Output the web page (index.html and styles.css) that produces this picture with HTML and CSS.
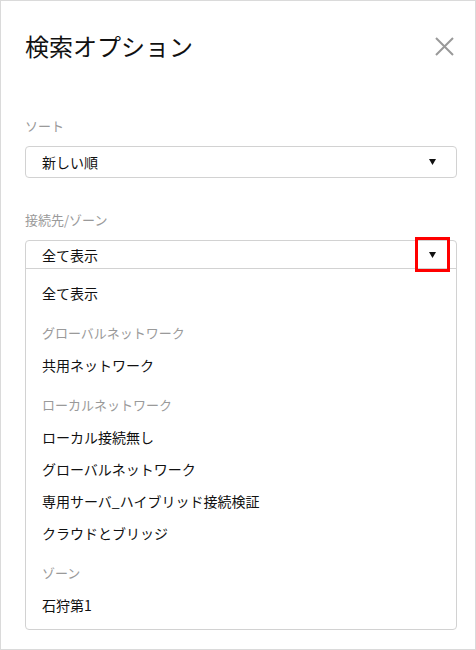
FILE: index.html
```html
<!DOCTYPE html>
<html lang="ja">
<head>
    <meta charset="UTF-8">
    <meta name="viewport" content="width=device-width, initial-scale=1.0">
    <title>検索オプション</title>
    <link rel="stylesheet" href="styles.css">
</head>
<body>
    <div class="dialog">
        <div class="dialog-head">
            <h1 class="dialog-title">検索オプション</h1>
            <svg class="close" width="19" height="19" viewBox="0 0 19 19">
                <path d="M1 1L18 18M18 1L1 18" stroke="#999" stroke-width="2" fill="none"/>
            </svg>
        </div>

        <div class="field first">
            <div class="field-label">ソート</div>
            <div class="select">
                <span>新しい順</span>
                <svg class="caret" width="7" height="6" viewBox="0 0 7 6"><polygon points="0,0 7,0 3.5,6" fill="#111"/></svg>
            </div>
        </div>

        <div class="field">
            <div class="field-label">接続先/ゾーン</div>
            <div class="combo">
                <div class="combo-head">
                    <span>全て表示</span>
                    <svg class="caret" width="7" height="6" viewBox="0 0 7 6"><polygon points="0,0 7,0 3.5,6" fill="#111"/></svg>
                    <span class="highlight"></span>
                </div>
                <ul class="options">
                    <li class="option">全て表示</li>
                    <li class="group">グローバルネットワーク</li>
                    <li class="option">共用ネットワーク</li>
                    <li class="group">ローカルネットワーク</li>
                    <li class="option">ローカル接続無し</li>
                    <li class="option">グローバルネットワーク</li>
                    <li class="option">専用サーバ_ハイブリッド接続検証</li>
                    <li class="option">クラウドとブリッジ</li>
                    <li class="group">ゾーン</li>
                    <li class="option">石狩第1</li>
                </ul>
            </div>
        </div>
    </div>
</body>
</html>
```

FILE: styles.css
```css
*{
    padding: 0;
    margin: 0;
    box-sizing: border-box;
}
body{
    font-family: "Noto Sans CJK JP", "Noto Sans", sans-serif;
    color: #111;
    background: #fff;
}
.dialog{
    width: 476px;
    height: 650px;
    border: 1px solid #dadada;
    padding: 30px 18px 0 24px;
}
.dialog-head{
    display: flex;
    justify-content: space-between;
    align-items: center;
    height: 30px;
}
.dialog-title{
    font-size: 24px;
    font-weight: normal;
    line-height: 30px;
}
.close{
    display: block;
    margin-right: 3px;
}
.field{
    margin-top: 32px;
}
.field.first{
    margin-top: 55px;
}
.field-label{
    font-size: 13px;
    line-height: 20px;
    color: #9a9a9a;
    margin-bottom: 10px;
}
.select{
    height: 32px;
    border: 1px solid #d2d2d2;
    border-radius: 4px;
    padding: 0 20px 0 16px;
    display: flex;
    justify-content: space-between;
    align-items: center;
    font-size: 14px;
}
.caret{
    display: block;
}
.combo{
    border: 1px solid #d2d2d2;
    border-radius: 4px;
}
.combo-head{
    position: relative;
    height: 28px;
    border-bottom: 1px solid #d2d2d2;
    padding: 0 20px 0 16px;
    display: flex;
    justify-content: space-between;
    align-items: center;
    font-size: 14px;
}
.highlight{
    position: absolute;
    right: 6px;
    top: -4px;
    width: 35px;
    height: 35px;
    border: 3px solid #f00;
}
.options{
    list-style: none;
    padding: 8px 0;
}
.options > li{
    line-height: 32px;
    padding-left: 16px;
}
.option{
    font-size: 14px;
}
.group{
    font-size: 13px;
    color: #9a9a9a;
    margin-top: 8px;
}
```
